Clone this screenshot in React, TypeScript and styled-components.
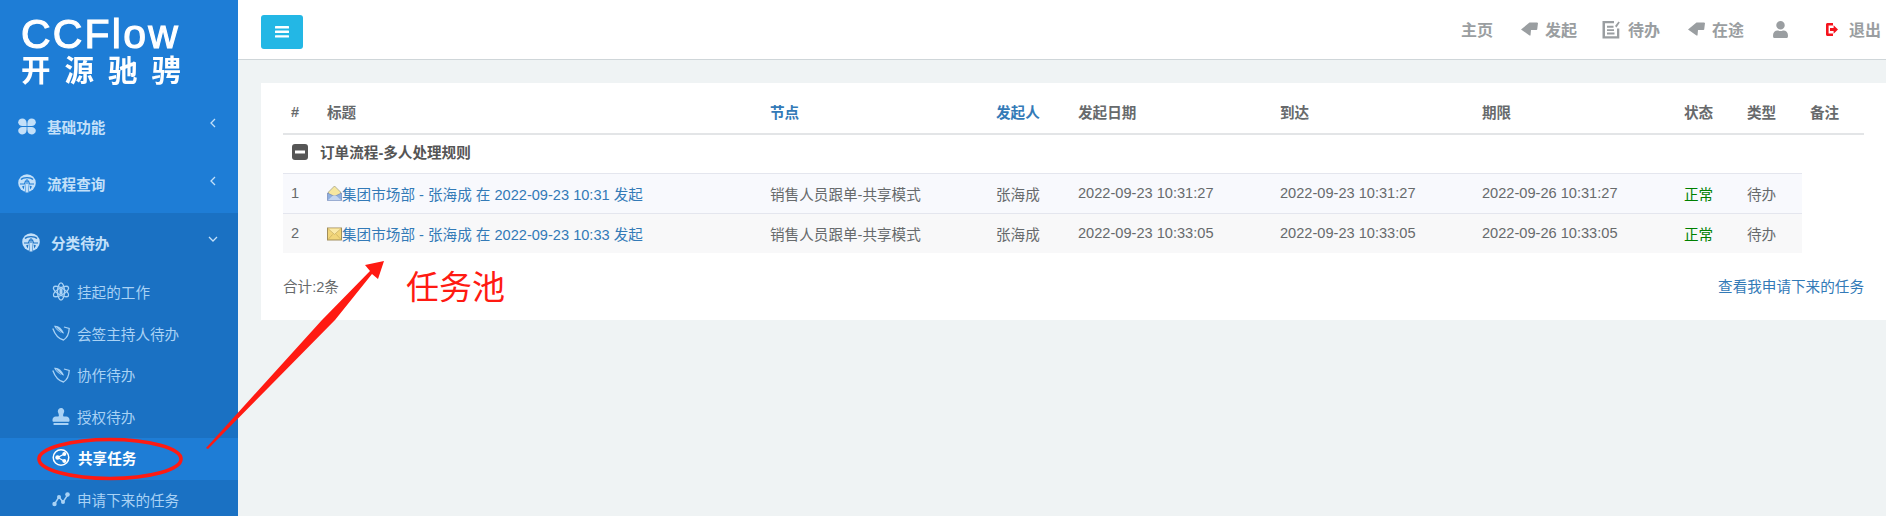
import React from "react";
import styled, { createGlobalStyle } from "styled-components";
import { FaStamp, FaUser } from "react-icons/fa";

const GlobalStyle = createGlobalStyle`
  html, body {
    margin: 0;
    padding: 0;
    height: 100%;
    overflow: hidden;
    background: #eff3f4;
    font-family: "Liberation Sans", "Noto Sans CJK SC", sans-serif;
  }
  * { box-sizing: border-box; }
`;

const Page = styled.div`
  position: relative;
  display: flex;
  width: 1886px;
  height: 516px;
  overflow: hidden;
  font-size: 14.6px;
  color: #676a6c;
`;

const Sidebar = styled.aside`
  flex: 0 0 238px;
  height: 516px;
  background: #1e7dd6;
  overflow: hidden;
`;

const Logo = styled.div`
  height: 98px;
  padding: 14px 0 0 21px;
  color: #fff;
  filter: blur(0.35px);
`;

const LogoTitle = styled.div`
  font-size: 41px;
  line-height: 41px;
  letter-spacing: 2.2px;
  -webkit-text-stroke: 1.1px #fff;
`;

const LogoSub = styled.div`
  display: flex;
  gap: 14px;
  width: 166px;
  font-size: 29.5px;
  line-height: 31px;
  font-weight: 700;
`;

const MenuGroup = styled.div<{ $active?: boolean }>`
  display: flex;
  align-items: center;
  height: ${(p) => (p.$active ? "59px" : "57.5px")};
  padding: 0 20px 1px ${(p) => (p.$active ? "22px" : "18px")};
  background: ${(p) => (p.$active ? "#1a71c3" : "transparent")};
  color: #c3e0f9;
  font-weight: 700;
  svg.main {
    flex: 0 0 18px;
    margin-right: 11px;
  }
  svg.chev {
    margin-left: auto;
    margin-top: -6px;
  }
`;

const SubMenu = styled.div`
  height: 245px;
  background: #1a71c3;
`;

const SubItem = styled.div<{ $active?: boolean }>`
  display: flex;
  align-items: center;
  height: 41.5px;
  padding: 0 0 2px 52px;
  background: ${(p) => (p.$active ? "#1e7dd6" : "transparent")};
  color: ${(p) => (p.$active ? "#fff" : "#a9d2f5")};
  font-weight: ${(p) => (p.$active ? 700 : 400)};
  svg {
    flex: 0 0 18px;
    margin-right: ${(p) => (p.$active ? "8px" : "7px")};
  }
`;

const Main = styled.main`
  flex: 1;
  display: flex;
  flex-direction: column;
  min-width: 0;
`;

const TopBar = styled.header`
  display: flex;
  align-items: center;
  justify-content: space-between;
  height: 60px;
  padding: 0 5px 1px 23px;
  background: #fff;
  border-bottom: 1px solid #cfd6d9;
`;

const MenuButton = styled.button`
  display: flex;
  align-items: center;
  justify-content: center;
  width: 42px;
  height: 34px;
  margin-top: 5px;
  padding: 0;
  border: none;
  border-radius: 3px;
  background: #23b7e5;
`;

const Nav = styled.nav`
  display: flex;
  align-items: center;
  gap: 28px;
`;

const NavItem = styled.span<{ $gap?: number; $after?: number }>`
  display: flex;
  align-items: center;
  gap: ${(p) => p.$gap ?? 7}px;
  margin-right: ${(p) => p.$after ?? 0}px;
  font-size: 16px;
  font-weight: 700;
  color: #9a9ea1;
`;

const Content = styled.div`
  flex: 1;
  padding: 23px 0 0 23px;
`;

const Card = styled.section`
  height: 237px;
  padding: 0 22px;
  background: #fff;
`;

const Table = styled.table`
  width: 1581px;
  table-layout: fixed;
  border-collapse: collapse;
`;

const Th = styled.th<{ $w: number; $link?: boolean }>`
  width: ${(p) => p.$w}px;
  height: 51px;
  padding: 7px 8px 0;
  border-bottom: 2px solid #e3e5e7;
  text-align: left;
  font-weight: 700;
  color: ${(p) => (p.$link ? "#337ab7" : "#676a6c")};
`;

const GroupCell = styled.td`
  height: 39px;
  padding: 0 8px 4px 9px;
  font-weight: 700;
  color: #555;
`;

const GroupLabel = styled.div`
  display: flex;
  align-items: center;
  gap: 12px;
`;

const Row = styled.tr<{ $bg: string }>`
  td {
    background: ${(p) => p.$bg};
  }
`;

const Td = styled.td<{ $green?: boolean }>`
  height: 40px;
  padding: 0 8px;
  border-top: 1px solid #e4e6ee;
  white-space: nowrap;
  color: ${(p) => (p.$green ? "#008000" : "#676a6c")};
`;

const TitleLink = styled.a`
  display: flex;
  align-items: center;
  color: #337ab7;
  text-decoration: none;
`;

const FootRow = styled.div`
  display: flex;
  justify-content: space-between;
  padding-top: 24px;
  line-height: 20px;
`;

const FootLink = styled.a`
  color: #337ab7;
  text-decoration: none;
`;

const Overlay = styled.svg`
  position: absolute;
  top: 0;
  left: 0;
  pointer-events: none;
`;

const PoolLabel = styled.div`
  position: absolute;
  left: 406px;
  top: 265px;
  font-size: 33px;
  line-height: 46px;
  color: #ff1a12;
`;

const light = "#c3e0f9";
const sub = "#a9d2f5";

const Chevron = ({ down }: { down?: boolean }) => (
  <svg className="chev" width="10" height="10" viewBox="0 0 10 10" fill="none" stroke={light} strokeWidth="1.3">
    <path d={down ? "M1 3l4 4 4-4" : "M7 1L3 5l4 4"} />
  </svg>
);

const Clover = () => (
  <svg className="main" width="18" height="17" viewBox="0 0 18 17" fill={light}>
    <path d="M8.6 8V5.2C8.6 2.4 6.8.5 4.4.5S.2 2.2.2 4.2 2 8 4.4 8z" />
    <path d="M9.4 8V5.2C9.4 2.4 11.2.5 13.6.5s4.2 1.7 4.2 3.7S16 8 13.6 8z" />
    <path d="M8.6 9v2.8c0 2.8-1.8 4.7-4.2 4.7S.2 14.8.2 12.8 2 9 4.4 9z" />
    <path d="M9.4 9v2.8c0 2.8 1.8 4.7 4.2 4.7s4.2-1.7 4.2-3.7S16 9 13.6 9z" />
  </svg>
);

const TreeGlobe = ({ bg }: { bg: string }) => (
  <svg className="main" width="18" height="19" viewBox="0 0 18 19">
    <circle cx="9" cy="9" r="8.8" fill={light} />
    <path d="M3 5.5C5 3 13 3 15 5.5" fill="none" stroke={bg} strokeWidth="1.3" />
    <path d="M2 10h4.5l1-3h3l1 3H16" fill="none" stroke={bg} strokeWidth="1.2" />
    <path d="M7 18l.8-9h.7l-.3 9zM11 18l-.8-9h-.7l.3 9z" fill={bg} />
    <path d="M4 12.5l2.5-1-.8 4zM14 12.5l-2.500-1 .8 4z" fill={bg} />
    <path d="M7.5 18.500h3L10 9H8z" fill={light} />
    <path d="M8.5 5v5h1V5z" fill={bg} />
  </svg>
);

const AtomIcon = () => (
  <svg width="18" height="19" viewBox="0 0 18 19" fill="none" stroke={sub} strokeWidth="1.3">
    <ellipse cx="9" cy="9.5" rx="3.5" ry="8.6" />
    <ellipse cx="9" cy="9.5" rx="3.5" ry="8.6" transform="rotate(60 9 9.5)" />
    <ellipse cx="9" cy="9.5" rx="3.5" ry="8.6" transform="rotate(-60 9 9.5)" />
    <rect x="7.5" y="6.5" width="3" height="6" fill={sub} stroke="none" />
  </svg>
);

const QuillIcon = () => (
  <svg width="18" height="16" viewBox="0 0 18 16" fill="none" stroke={sub} strokeWidth="1.3">
    <path d="M.8 3.5C3 9.500 7 14 11.5 15c3.3-2 5.5-6.5 5.7-11.5L12 2" />
    <path d="M2 .8C6 0 10 3 12 8.5 8 8 4 5 2 .8z" fill={sub} stroke="none" />
    <path d="M4 2.500l7.5 7" stroke="#1a71c3" strokeWidth=".7" />
  </svg>
);

const ShareCircle = () => (
  <svg width="19" height="19" viewBox="0 0 19 19">
    <circle cx="9.5" cy="9.5" r="8.2" fill="none" stroke="#fff" strokeWidth="1.6" />
    <path d="M13 5.8L6 9.5l7 3.7" stroke="#fff" strokeWidth="1.4" fill="none" />
    <circle cx="13" cy="5.8" r="2.1" fill="#fff" />
    <circle cx="13" cy="13.2" r="2.1" fill="#fff" />
    <circle cx="5.8" cy="9.5" r="2.3" fill="#fff" />
  </svg>
);

const NodeLine = () => (
  <svg width="18" height="15" viewBox="0 0 18 15" fill={sub}>
    <path d="M2.5 12L7 5l4 5 5-7.5" stroke={sub} strokeWidth="1.4" fill="none" />
    <circle cx="2.5" cy="12" r="2.2" />
    <circle cx="7" cy="5" r="2" />
    <circle cx="11" cy="10" r="2" />
    <circle cx="15.5" cy="2.5" r="2.3" />
  </svg>
);

const TagIcon = () => (
  <svg width="17" height="14" viewBox="0 0 17 14" fill="#9a9ea1">
    <path d="M0 7.5L8.5.5H16l1 .5-.8 6.5-.7.5H10l-.5 5.5H8.5z" />
  </svg>
);

const EditIcon = () => (
  <svg width="18" height="19" viewBox="0 0 18 19">
    <path d="M.5 1H12v2.200H3v13h12V8.500h2.300V18.500H.5z" fill="#9a9ea1" />
    <path d="M5 5.800h6.500v1.900H5zM5 9.200h7v1.900H5zM5 12.600h7.500v1.900H5z" fill="#9a9ea1" />
    <path d="M13 6l3.500-4.500 1.300 1L14.500 7.500z" fill="#9a9ea1" />
  </svg>
);

const LogoutIcon = () => (
  <svg width="12" height="13" viewBox="0 0 12 13" fill="#f5141e">
    <path d="M0 1.5C0 .7.7 0 1.5 0H7v2.4H2.6v8.200H7V13H1.5C.7 13 0 12.3 0 11.5z" />
    <path d="M4 5h3.6V2.3L12 6.5l-4.400 4.200V8H4z" />
  </svg>
);

const OpenMail = () => (
  <svg width="15" height="16" viewBox="0 0 15 16" style={{ flex: "0 0 15px" }}>
    <path d="M1.5 7L7.5 1l6 6v4h-12z" fill="#f6e7a0" stroke="#9a9a80" strokeWidth=".7" />
    <path d="M.5 8l7 3.4 7-3.4v7.5H.5z" fill="#8fb0e0" stroke="#7488b8" strokeWidth=".7" />
    <path d="M.8 15.200L6 10.600h3l5.200 4.600z" fill="#c4d6f0" />
  </svg>
);

const ClosedMail = () => (
  <svg width="15" height="16" viewBox="0 0 15 16" style={{ flex: "0 0 15px" }}>
    <rect x=".5" y="3" width="14" height="12" fill="#f2d67a" stroke="#9a8550" strokeWidth=".9" />
    <path d="M.8 3.400l6.700 6 6.700-6" fill="#fbeaa8" stroke="#c4aa62" strokeWidth=".7" />
    <path d="M.8 14.700l5-5.400M14.200 14.700l-5-5.400" stroke="#c9ad5c" strokeWidth=".7" />
  </svg>
);

const columns = [
  { label: "#", w: 36 },
  { label: "标题", w: 443 },
  { label: "节点", w: 226, link: true },
  { label: "发起人", w: 82, link: true },
  { label: "发起日期", w: 202 },
  { label: "到达", w: 202 },
  { label: "期限", w: 202 },
  { label: "状态", w: 63 },
  { label: "类型", w: 63 },
  { label: "备注", w: 62 },
];

const rows = [
  { no: 1, bg: "#f8f9fd", mail: <OpenMail />, title: "集团市场部 - 张海成 在 2022-09-23 10:31 发起", start: "2022-09-23 10:31:27", due: "2022-09-26 10:31:27" },
  { no: 2, bg: "#f8f8f9", mail: <ClosedMail />, title: "集团市场部 - 张海成 在 2022-09-23 10:33 发起", start: "2022-09-23 10:33:05", due: "2022-09-26 10:33:05" },
];

const App = () => {
  return (
    <Page>
      <GlobalStyle />
      <Sidebar>
        <Logo>
          <LogoTitle>CCFlow</LogoTitle>
          <LogoSub>
            <span>开</span>
            <span>源</span>
            <span>驰</span>
            <span>骋</span>
          </LogoSub>
        </Logo>
        <MenuGroup>
          <Clover />
          基础功能
          <Chevron />
        </MenuGroup>
        <MenuGroup>
          <TreeGlobe bg="#1e7dd6" />
          流程查询
          <Chevron />
        </MenuGroup>
        <MenuGroup $active>
          <TreeGlobe bg="#1a71c3" />
          分类待办
          <Chevron down />
        </MenuGroup>
        <SubMenu>
          <SubItem>
            <AtomIcon />
            挂起的工作
          </SubItem>
          <SubItem>
            <QuillIcon />
            会签主持人待办
          </SubItem>
          <SubItem>
            <QuillIcon />
            协作待办
          </SubItem>
          <SubItem>
            <FaStamp size={17} />
            授权待办
          </SubItem>
          <SubItem $active>
            <ShareCircle />
            共享任务
          </SubItem>
          <SubItem>
            <NodeLine />
            申请下来的任务
          </SubItem>
        </SubMenu>
      </Sidebar>
      <Main>
        <TopBar>
          <MenuButton>
            <svg width="14" height="12" viewBox="0 0 14 12" fill="#fff">
              <rect width="14" height="2.4" y="0" rx=".5" />
              <rect width="14" height="2.4" y="4.6" rx=".5" />
              <rect width="14" height="2.4" y="9.2" rx=".5" />
            </svg>
          </MenuButton>
          <Nav>
            <NavItem>主页</NavItem>
            <NavItem $after={-3}>
              <TagIcon />
              发起
            </NavItem>
            <NavItem $gap={8}>
              <EditIcon />
              待办
            </NavItem>
            <NavItem>
              <TagIcon />
              在途
            </NavItem>
            <NavItem $after={9}>
              <FaUser size={17} />
            </NavItem>
            <NavItem $gap={11}>
              <LogoutIcon />
              退出
            </NavItem>
          </Nav>
        </TopBar>
        <Content>
          <Card>
            <Table>
              <thead>
                <tr>
                  {columns.map((c) => (
                    <Th key={c.label} $w={c.w} $link={c.link}>
                      {c.label}
                    </Th>
                  ))}
                </tr>
              </thead>
              <tbody>
                <tr>
                  <GroupCell colSpan={10}>
                    <GroupLabel>
                      <svg width="16" height="16" viewBox="0 0 16 16">
                        <rect width="16" height="16" rx="3" fill="#555" />
                        <rect x="3" y="6.5" width="10" height="3" fill="#fff" />
                      </svg>
                      订单流程-多人处理规则
                    </GroupLabel>
                  </GroupCell>
                </tr>
                {rows.map((r) => (
                  <Row key={r.no} $bg={r.bg}>
                    <Td>{r.no}</Td>
                    <Td>
                      <TitleLink>
                        {r.mail}
                        {r.title}
                      </TitleLink>
                    </Td>
                    <Td>销售人员跟单-共享模式</Td>
                    <Td>张海成</Td>
                    <Td>{r.start}</Td>
                    <Td>{r.start}</Td>
                    <Td>{r.due}</Td>
                    <Td $green>正常</Td>
                    <Td>待办</Td>
                  </Row>
                ))}
              </tbody>
            </Table>
            <FootRow>
              <span>合计:2条</span>
              <FootLink>查看我申请下来的任务</FootLink>
            </FootRow>
          </Card>
        </Content>
      </Main>
      <Overlay width="1886" height="516" viewBox="0 0 1886 516">
        <ellipse cx="110" cy="459" rx="71" ry="19.5" fill="none" stroke="#ff1a12" strokeWidth="3.6" />
        <path d="M206 448L322 320L370 271L365 265L384 261L378 279L372 274L335 320L208 449Z" fill="#ff1a12" />
      </Overlay>
      <PoolLabel>任务池</PoolLabel>
    </Page>
  );
};

export default App;
